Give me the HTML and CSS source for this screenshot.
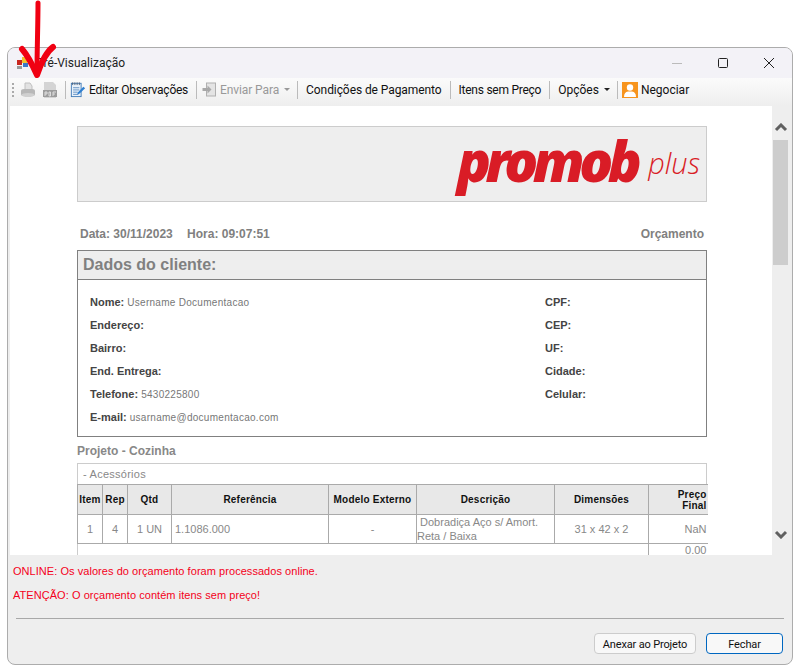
FILE: index.html
```html
<!DOCTYPE html>
<html lang="pt-BR">
<head>
<meta charset="utf-8">
<title>Pré-Visualização</title>
<link rel="stylesheet" href="styles.css">
</head>
<body>
<div class="window">
  <header class="titlebar">
    <svg class="app-icon" width="14" height="12" viewBox="0 0 14 12"><rect x="0" y="3" width="5" height="5" fill="#c8261e"/><rect x="5" y="0" width="5" height="6" fill="#f2c230"/><rect x="6" y="6" width="5" height="4" fill="#3b78c8"/><rect x="0" y="9" width="5" height="3" fill="#999"/></svg>
    <span class="title">Pré-Visualização</span>
    <div class="controls">
      <svg class="ctl" width="12" height="12" viewBox="0 0 12 12"><path d="M1 6.500H11" stroke="#bbb"/></svg>
      <svg class="ctl ctl-max" width="12" height="12" viewBox="0 0 12 12"><rect x="1.500" y="1.500" width="9" height="9" rx="1" fill="none" stroke="#222"/></svg>
      <svg class="ctl ctl-close" width="12" height="12" viewBox="0 0 12 12"><path d="M1 1L11 11M11 1L1 11" stroke="#222"/></svg>
    </div>
  </header>
  <nav class="toolbar">
    <span class="grip"></span>
    <svg class="tool-icon" width="16" height="16" viewBox="0 0 16 16"><path d="M5 1h5l2 3v4H5z" fill="#e2e2e2" stroke="#c0c0c0"/><path d="M1 9q0-2 3-2h8q3 0 3 2v3q0 2-3 2H4q-3 0-3-2z" fill="#b8b8b8"/><ellipse cx="8" cy="13" rx="6.500" ry="2" fill="#d0d0d0"/></svg>
    <svg class="tool-icon pdf" width="14" height="16" viewBox="0 0 14 16"><path d="M1 0h9l3 3v13H1z" fill="#d4d4d4"/><rect x="0" y="8" width="14" height="7" fill="#9c9c9c"/><path d="M2 10v4M2 10h2v2H2M6 10v4h1.500v-4zM10 14v-4h3M10 12h2" stroke="#eee" stroke-width=".8" fill="none"/></svg>
    <span class="sep"></span>
    <svg class="tool-icon" width="16" height="17" viewBox="0 0 18 18"><rect x="1.500" y="2" width="11" height="15" fill="#e8f1fa" stroke="#3e78b5"/><path d="M3 1v3M5.500 1v3M8 1v3M10.500 1v3" stroke="#4a5a70"/><path d="M3.500 7h7M3.500 9.500h7M3.500 12h5M3.500 14.500h6" stroke="#5a8cc0"/><path d="M9 12l6-6 2 1.500-6 6-3 1z" fill="#2f7fd0"/></svg>
    <span class="tool-label is-tight">Editar Observações</span>
    <span class="sep"></span>
    <svg class="tool-icon" width="16" height="15" viewBox="0 0 15 15"><rect x="5" y="1" width="9" height="13" fill="#e4e4e4" stroke="#b0b0b0"/><path d="M1 6h5V3.500l4 4-4 4V9H1z" fill="#a8a8a8"/></svg>
    <span class="tool-label is-off">Enviar Para</span>
    <span class="caret is-off-caret"></span>
    <span class="sep"></span>
    <span class="tool-label is-snug">Condições de Pagamento</span>
    <span class="sep"></span>
    <span class="tool-label is-tight">Itens sem Preço</span>
    <span class="sep"></span>
    <span class="tool-label">Opções</span>
    <span class="caret"></span>
    <span class="sep"></span>
    <svg class="tool-icon" width="16" height="16" viewBox="0 0 16 16"><rect width="16" height="16" fill="#f7941d"/><circle cx="8" cy="5.500" r="3.200" fill="#fff"/><path d="M2 15q0-5 4-5.500h4q4 .5 4 5.500z" fill="#fff"/></svg>
    <span class="tool-label">Negociar</span>
  </nav>
  <main class="content">
    <div class="preview">
      <div class="report">
        <div class="banner">
          <span class="logo">promob</span>
          <span class="logo-plus">plus</span>
        </div>
        <div class="meta">
          <span class="meta-left">Data: 30/11/2023 <span class="meta-gap">Hora: 09:07:51</span></span>
          <span>Orçamento</span>
        </div>
        <section class="client">
          <h2 class="client-head">Dados do cliente:</h2>
          <div class="client-body">
            <div class="field"><b>Nome:</b> <span class="val">Username Documentacao</span></div><div class="field"><b>CPF:</b></div>
            <div class="field"><b>Endereço:</b></div><div class="field"><b>CEP:</b></div>
            <div class="field"><b>Bairro:</b></div><div class="field"><b>UF:</b></div>
            <div class="field"><b>End. Entrega:</b></div><div class="field"><b>Cidade:</b></div>
            <div class="field"><b>Telefone:</b> <span class="val">5430225800</span></div><div class="field"><b>Celular:</b></div>
            <div class="field"><b>E-mail:</b> <span class="val">usarname@documentacao.com</span></div><div class="field"></div>
          </div>
        </section>
        <h3 class="project">Projeto - Cozinha</h3>
        <div class="caption">- Acessórios</div>
        <table class="items">
          <colgroup><col class="c1"><col class="c2"><col class="c3"><col class="c4"><col class="c5"><col class="c6"><col class="c7"><col class="c8"></colgroup>
          <thead>
            <tr><th>Item</th><th>Rep</th><th>Qtd</th><th>Referência</th><th>Modelo Externo</th><th>Descrição</th><th>Dimensões</th><th class="num">Preço<br>Final</th></tr>
          </thead>
          <tbody>
            <tr class="row"><td>1</td><td>4</td><td>1 UN</td><td class="left">1.1086.000</td><td>-</td><td class="desc">&nbsp;Dobradiça Aço s/ Amort.<br>Reta / Baixa</td><td>31 x 42 x 2</td><td class="num">NaN</td></tr>
            <tr class="total"><td colspan="7" class="blank"></td><td class="num">0.00</td></tr>
          </tbody>
        </table>
      </div>
    </div>
    <div class="scrollbar">
      <svg width="14" height="9" viewBox="0 0 14 9"><path d="M2 7l5-5 5 5" fill="none" stroke="#606060" stroke-width="3"/></svg>
      <div class="thumb"></div>
      <svg class="down" width="14" height="9" viewBox="0 0 14 9"><path d="M2 2l5 5 5-5" fill="none" stroke="#606060" stroke-width="3"/></svg>
    </div>
  </main>
  <footer class="footer">
    <p class="msg">ONLINE: Os valores do orçamento foram processados online.</p>
    <p class="msg">ATENÇÃO: O orçamento contém itens sem preço!</p>
    <hr class="rule">
    <div class="actions">
      <button class="btn btn-attach">Anexar ao Projeto</button>
      <button class="btn btn-close">Fechar</button>
    </div>
  </footer>
</div>
<svg class="arrow" width="40" height="82" viewBox="0 0 40 82"><path d="M20 3C20 25 19 50 19 72" fill="none" stroke="#f00012" stroke-width="5" stroke-linecap="round"/><path d="M4 49C10 56 15 66 19 75C22 66 27 53 35 47" fill="none" stroke="#f00012" stroke-width="6" stroke-linecap="round" stroke-linejoin="round"/></svg>
</body>
</html>
```
FILE: styles.css
```css
* { box-sizing: border-box; }
html, body { margin: 0; height: 666px; overflow: hidden; background: #fff; }
body { position: relative; font-family: Roboto, sans-serif; color: #111; }
.window { margin: 47px 6px 0 7px; height: 618px; border: 1px solid #acacac; border-radius: 8px; background: #eeeeee; display: flex; flex-direction: column; overflow: hidden; }
.titlebar { height: 30px; flex: none; background: #f3f2f7; display: flex; align-items: center; padding-left: 9px; }
.app-icon { flex: none; }
.title { margin-left: 5px; font-size: 12px; color: #222; }
.controls { margin-left: auto; display: flex; align-items: center; margin-right: 17px; }
.ctl-max { margin-left: 34px; }
.ctl-close { margin-left: 34px; }
.toolbar { height: 28px; flex: none; display: flex; align-items: center; padding: 0 0 5px 3px; background: linear-gradient(#fbfbfb, #eeeeee); margin-left: 1px; font-size: 12px; }
.grip { width: 2px; height: 14px; margin-right: 6px; background: repeating-linear-gradient(#aaa 0 2px, transparent 2px 4px); }
.tool-icon { flex: none; }
.pdf { margin-left: 7px; }
.sep { width: 1px; height: 18px; background: #bbb; margin: 0 4px 0 8px; flex: none; }
.tool-label { margin-left: 3px; white-space: nowrap; color: #111; }
.sep + .tool-label { margin-left: 4px; }
.is-tight { letter-spacing: -.25px; }
.is-snug { letter-spacing: -.08px; }
.is-off { color: #999; letter-spacing: -.1px; }
.caret { width: 0; height: 0; border: 3px solid transparent; border-top: 3px solid #222; border-bottom: 0; margin: 0 -1px 0 5px; }
.is-off-caret { border-top-color: #999; }
.content { height: 449px; flex: none; display: flex; margin-left: 2px; }
.preview { width: 762px; background: #fff; overflow: hidden; padding: 20px 0 0 67px; }
.report { width: 630px; font-family: "Liberation Sans", sans-serif; }
.banner { height: 76px; border: 1px solid #ccc; background: #eeeeee; display: flex; justify-content: flex-end; align-items: center; padding: 0 6px 8px 0; }
.logo { font-family: "Open Sans", sans-serif; font-weight: 800; font-style: italic; font-size: 56px; color: #d91c26; letter-spacing: -5.500px; line-height: 60px; }
.logo-plus { font-family: "Open Sans", sans-serif; font-style: italic; font-weight: 300; font-size: 29px; color: #d91c26; margin-left: 12px; line-height: 40px; margin-top: 6px; }
.meta { height: 48px; display: flex; justify-content: space-between; align-items: flex-start; padding: 25px 3px 0; font-size: 12px; font-weight: bold; color: #808080; }
.meta-gap { margin-left: 11px; }
.client { height: 187px; border: 1px solid #808080; }
.client-head { margin: 0; height: 29px; border-bottom: 1px solid #808080; background: #eeeeee; font-size: 16px; line-height: 28px; padding-left: 5px; color: #808080; font-weight: bold; }
.client-body { display: grid; grid-template-columns: 455px 1fr; grid-auto-rows: 23px; padding: 11px 0 0 12px; }
.field { font-size: 11px; line-height: 23px; color: #444; }
.val { font-size: 10px; color: #777; letter-spacing: .28px; }
.project { margin: 7px 0 0; height: 19px; font-size: 12px; line-height: 14px; font-weight: bold; color: #888; }
.caption { height: 21px; border: 1px solid #ccc; border-bottom: 0; font-size: 11px; line-height: 20px; color: #888; padding-left: 5px; letter-spacing: .25px; }
.items { border-collapse: collapse; table-layout: fixed; width: 630px; font-size: 11px; color: #888; }
.c1, .c2 { width: 25px; }
.c3 { width: 44px; }
.c4 { width: 157px; }
.c5 { width: 88px; }
.c6 { width: 138px; }
.c7 { width: 94px; }
.c8 { width: 59px; }
.items th { height: 30px; background: #e8e8e8; border: 1px solid #aaa; color: #111; font-size: 10px; padding: 0; letter-spacing: .2px; }
.items td { border: 1px solid #aaa; text-align: center; padding: 0; height: 29px; }
.items .left { text-align: left; padding-left: 3px; }
.items .desc { text-align: left; line-height: 14px; }
.items th.num, .items td.num { text-align: right; padding-right: 1px; border-right: 0; }
.total td { height: 24px; vertical-align: top; }
.items .blank { border-left: 1px solid #ccc; }
.scrollbar { width: 18px; position: relative; padding: 17px 0 0 2px; display: flex; flex-direction: column; }
.thumb { width: 15px; height: 125px; margin: 8px 0 0 -1px; background: #cdcdcd; }
.down { margin-top: 265px; }
.footer { flex: 1; display: flex; flex-direction: column; font-family: "Liberation Sans", sans-serif; }
.msg { margin: 0; font-size: 11px; letter-spacing: .05px; color: #f40020; padding-left: 5px; height: 24px; line-height: 24px; }
.msg:first-child { margin-top: 4px; }
.rule { margin: 11px 8px 0 8px; border: 0; border-top: 1px solid #a8a8a8; }
.actions { display: flex; justify-content: flex-end; gap: 10px; margin: 14px 9px 0 0; }
.btn { height: 21px; border-radius: 4px; font-family: Roboto, sans-serif; font-size: 11px; letter-spacing: -.15px; padding: 1px 0 0; background: #f8f8f8; color: #111; line-height: 17px; white-space: nowrap; }
.btn-attach { width: 102px; border: 1px solid #ccc; }
.btn-close { width: 77px; border: 1px solid #0067c0; }
.arrow { position: absolute; left: 18px; top: 0; }
```
